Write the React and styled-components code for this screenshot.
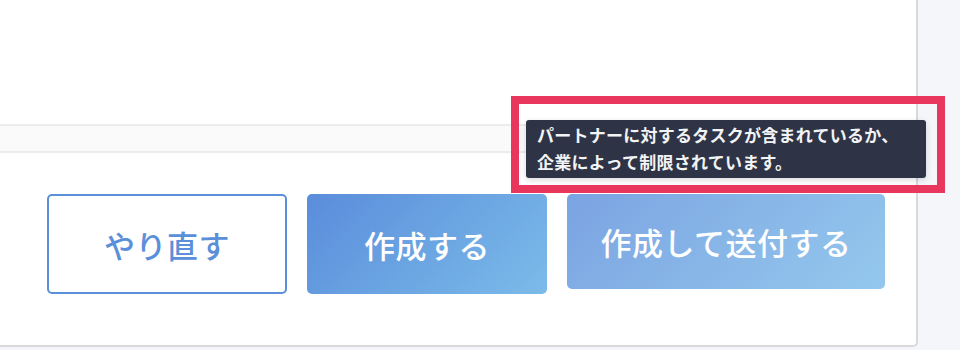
import React from "react";
import styled, { createGlobalStyle } from "styled-components";

const Global = createGlobalStyle`
  html, body { margin: 0; padding: 0; }
  body {
    background: #f5f6fa;
    font-family: "Noto Sans CJK JP", "Noto Sans", sans-serif;
    width: 960px;
    height: 350px;
    overflow: hidden;
  }
`;

const Page = styled.div`
  position: relative;
  width: 960px;
  height: 350px;
  padding-right: 42px;
  box-sizing: border-box;
`;

const Card = styled.div`
  width: 918px;
  height: 347px;
  box-sizing: border-box;
  background: #fff;
  border-right: 2px solid #d9d9dc;
  border-bottom: 2px solid #d9d9dc;
  border-bottom-right-radius: 5px;
  display: flex;
  flex-direction: column;
`;

const Body = styled.div`
  height: 124px;
`;

const Strip = styled.div`
  height: 25px;
  background: #fafafa;
  border-top: 2px solid #ececec;
  border-bottom: 2px solid #ececec;
`;

const Footer = styled.div`
  display: flex;
  align-items: flex-start;
  justify-content: flex-end;
  gap: 20px;
  padding: 41px 31px 0 0;
`;

const Button = styled.button`
  box-sizing: border-box;
  height: ${p => (p.$disabled ? "95px" : "100px")};
  min-width: 240px;
  padding: 0 33.5px;
  border-radius: 5px;
  font-family: "Noto Sans CJK JP", sans-serif;
  font-size: 31px;
  font-weight: 500;
  letter-spacing: 0.5px;
  cursor: pointer;
  border: ${p => (p.$outline ? "2px solid #5b8fd9" : "none")};
  color: ${p => (p.$outline ? "#5b8fd9" : "#fff")};
  background: ${p =>
    p.$outline ? "#fff" : "linear-gradient(135deg, #5a8ddb 0%, #7bbbe9 100%)"};
  opacity: ${p => (p.$disabled ? 0.8 : 1)};
`;

const Highlight = styled.div`
  position: absolute;
  left: 511px;
  top: 96px;
  width: 434px;
  height: 97px;
  box-sizing: border-box;
  border: 8px solid #e8365d;
  pointer-events: none;
`;

const Tooltip = styled.div`
  position: absolute;
  left: 526px;
  top: 120px;
  width: 400px;
  height: 58px;
  box-sizing: border-box;
  padding: 1px 10px 0 11px;
  background: #2e3446;
  border-radius: 3px;
  box-shadow: 0 2px 6px rgba(0, 0, 0, 0.15);
  color: #f2f3f5;
  font-family: "Noto Sans CJK JP", sans-serif;
  font-size: 17px;
  font-weight: 700;
  letter-spacing: 0.25px;
  line-height: 27px;
`;

export default function App() {
  return (
    <>
      <Global />
      <Page>
        <Card>
          <Body />
          <Strip />
          <Footer>
            <Button $outline>やり直す</Button>
            <Button>作成する</Button>
            <Button $disabled>作成して送付する</Button>
          </Footer>
        </Card>
        <Highlight />
        <Tooltip>
          パートナーに対するタスクが含まれているか、
          <br />
          企業によって制限されています。
        </Tooltip>
      </Page>
    </>
  );
}
